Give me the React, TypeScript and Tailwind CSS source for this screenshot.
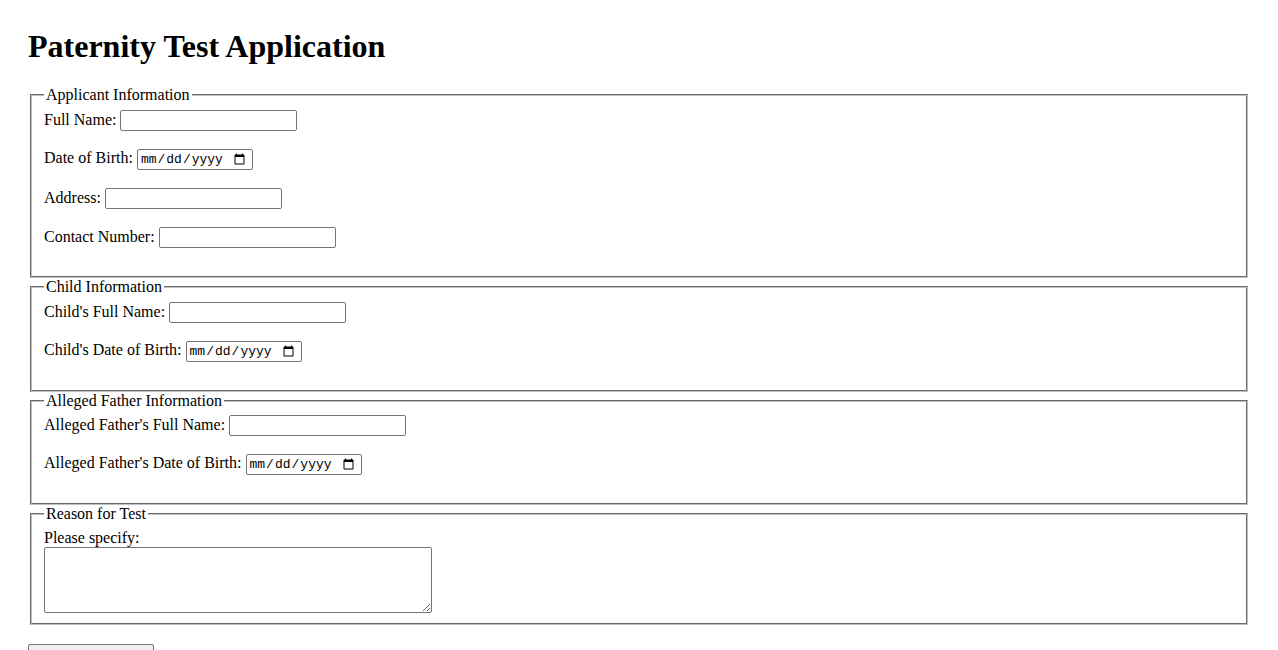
import React from "react";

const fs =
  "mx-[2px] px-3 pt-[0.35em] pb-[0.625em] border-2 border-[#c0c0c0] [border-style:groove] min-w-min";
const lg = "px-[2px]";
const txt =
  "inline-block align-baseline w-[177px] h-[21px] border border-[#767676] rounded-[2px] px-[2px] font-['Liberation_Sans'] text-[13.333px] leading-[normal] bg-white";
const date =
  "inline-block align-baseline w-[116px] h-[21px] border border-[#767676] rounded-[2px] pl-[2px] pr-[4px] font-['Liberation_Mono'] text-[13px] leading-[normal] bg-white text-black";

function TextRow({ label }: { label: string }) {
  return (
    <div className="mb-[18px]">
      <label>{label}</label> <input type="text" className={txt} />
    </div>
  );
}

function DateRow({ label }: { label: string }) {
  return (
    <div className="mb-[18px]">
      <label>{label}</label> <input type="date" className={date} />
    </div>
  );
}

export default function App() {
  return (
    <div className="font-['Liberation_Serif',serif] text-[16px] leading-[normal] text-black bg-white min-h-screen p-[28px]">
      <h1 className="text-[32px] font-bold mb-[21.44px]">Paternity Test Application</h1>
      <form>
        <fieldset className={fs}>
          <legend className={lg}>Applicant Information</legend>
          <TextRow label="Full Name:" />
          <DateRow label="Date of Birth:" />
          <TextRow label="Address:" />
          <TextRow label="Contact Number:" />
        </fieldset>
        <fieldset className={fs}>
          <legend className={lg}>Child Information</legend>
          <TextRow label="Child's Full Name:" />
          <DateRow label="Child's Date of Birth:" />
        </fieldset>
        <fieldset className={fs}>
          <legend className={lg}>Alleged Father Information</legend>
          <TextRow label="Alleged Father's Full Name:" />
          <DateRow label="Alleged Father's Date of Birth:" />
        </fieldset>
        <fieldset className={fs}>
          <legend className={lg}>Reason for Test</legend>
          <label className="block">Please specify:</label>
          <textarea className="block w-[388px] h-[66px] border border-[#767676] rounded-[2px] p-[2px] font-['Liberation_Mono'] text-[13px] bg-white" />
        </fieldset>
        <div className="mt-[19px]">
          <button
            type="button"
            className="h-[21px] px-[7px] border border-[#767676] rounded-[2px] bg-[#efefef] font-['Liberation_Sans'] text-[13.333px] leading-[normal] text-black"
          >
            Submit Application
          </button>
        </div>
      </form>
    </div>
  );
}
